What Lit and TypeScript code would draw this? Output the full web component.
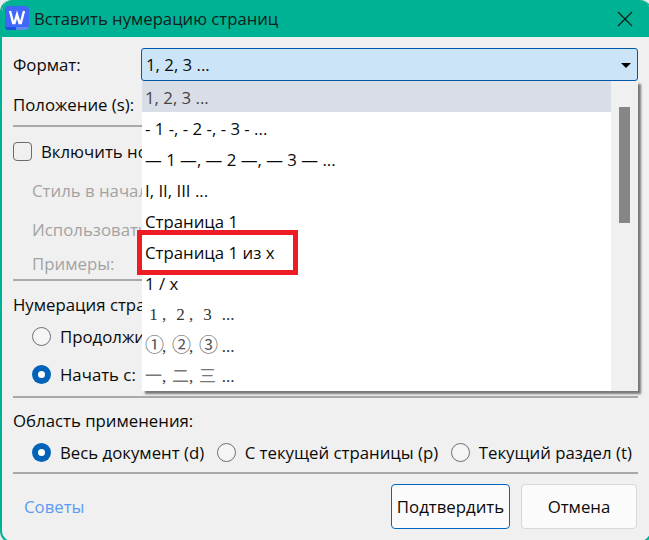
import { LitElement, html, css } from "lit";
import { customElement } from "lit/decorators.js";

const ROWS = [
  "1, 2, 3 ...",
  "- 1 -, - 2 -, - 3 - ...",
  "— 1 —, — 2 —, — 3 — ...",
  "I, II, III ...",
  "Страница 1",
  "Страница 1 из x",
  "1 / x",
];

@customElement("app-root")
export class AppRoot extends LitElement {
  static styles = css`
    :host {
      display: block;
      width: 649px;
      height: 540px;
      overflow: hidden;
      background: #e9ecea;
      font-family: "Open Sans", "Noto Sans", sans-serif;
      font-size: 16.8px;
      color: #0a0a0a;
    }
    .win {
      position: relative;
      box-sizing: border-box;
      width: 652px;
      height: 543px;
      border: 2px solid #00b294;
      border-top: 0;
      border-radius: 12px;
      background: #f0f0f0;
      overflow: hidden;
      display: flex;
      flex-direction: column;
    }
    .title {
      flex: none;
      height: 37px;
      background: #00b294;
      margin-left: -2px;
      margin-right: -2px;
      display: flex;
      align-items: center;
      padding-left: 5px;
      gap: 5px;
    }
    .title .t { line-height: 37px; color: #10201c; font-size: 16.7px; }
    .title .x { margin-left: auto; margin-right: 19px; display: block; }
    .logo { display: block; margin-top: -1px; }
    .body {
      flex: 1;
      display: flex;
      flex-direction: column;
      padding: 11px 12px 0 11px;
    }
    .row { display: flex; align-items: center; white-space: nowrap; }
    .fmt { height: 33px; }
    .fmt .lab { width: 128px; flex: none; }
    .select {
      flex: none;
      box-sizing: border-box;
      width: 497px;
      height: 33px;
      background: #cce4f7;
      border: 1px solid #0058a8;
      border-radius: 3px;
      display: flex;
      align-items: center;
      justify-content: space-between;
      padding: 0 6px 0 4px;
    }
    .caret { width: 0; height: 0; border: 5px solid transparent; border-top: 5px solid #000; border-bottom: 0; margin-top: 2px; }
    .pos { height: 24px; margin-top: 11px; }
    .sep { height: 2px; background: #a9a9a9; flex: none; }
    .sep1 { margin-top: 9px; }
    .chk { height: 20px; margin-top: 14px; gap: 9px; }
    .box { box-sizing: border-box; width: 19px; height: 19px; border: 1px solid #6b6b6b; border-radius: 4px; flex: none; }
    .dim { color: #a3a3a3; height: 24px; padding-left: 19px; }
    .dim1 { margin-top: 17px; }
    .dim2 { margin-top: 15px; }
    .dim3 { margin-top: 10px; }
    .sep2 { margin-top: 4px; }
    .h { height: 24px; margin-top: 11px; }
    .opt { height: 24px; padding-left: 19px; gap: 9px; }
    .opt1 { margin-top: 8px; }
    .opt2 { margin-top: 14px; }
    .radio { box-sizing: border-box; width: 19px; height: 19px; border-radius: 50%; border: 1px solid #6f6f6f; flex: none; background: #f5f5f5; }
    .radio.on { border: 0; background: #0062b8; display: flex; align-items: center; justify-content: center; }
    .radio.on::after { content: ""; width: 7px; height: 7px; border-radius: 50%; background: #fff; }
    .sep3 { margin-top: 10px; }
    .h2 { margin-top: 10px; }
    .scope { margin-top: 8px; gap: 0; }
    .scope .gap { width: 12.5px; flex: none; }
    .scope .lab { margin-left: 9px; }
    .sep4 { margin-top: 8px; }
    .foot { height: 45px; margin-top: 10px; display: flex; align-items: center; }
    .tips { color: #5b9bf5; padding-left: 11px; margin-right: auto; }
    .btn {
      box-sizing: border-box;
      height: 45px;
      background: #fbfbfb;
      border: 1px solid #d8d8d8;
      border-radius: 4px;
      display: flex;
      align-items: center;
      justify-content: center;
    }
    .ok { width: 119px; border-color: #0067c0; margin-right: 11px; }
    .cancel { width: 116px; margin-right: 1px; }

    .drop {
      position: absolute;
      left: 140px;
      top: 81px;
      width: 496px;
      height: 310px;
      background: #fff;
      display: flex;
      box-shadow: 3px 3px 2px rgba(0, 0, 0, 0.5);
    }
    .list { flex: none; width: 469px; }
    .item { height: 31px; line-height: 33px; padding-left: 3px; white-space: nowrap; }
    .item.sel { background: #d9dde5; color: #444; }
    .item.cjk { font-family: "Liberation Serif", "Noto Sans CJK SC", serif; font-size: 17px; color: #333; word-spacing: 1.5px; line-height: 34px; }
    .fw { display: inline-block; width: 17px; text-align: center; }
    .fw.thin { color: #777; }
    .fw.big { font-size: 19px; color: #555; }
    .sb { flex: 1; background: #f0f0f0; position: relative; }
    .thumb { position: absolute; left: 8px; top: 26px; width: 11px; height: 116px; background: #868686; }
    .mark {
      position: absolute;
      left: 135px;
      top: 230px;
      width: 161px;
      height: 45px;
      box-sizing: border-box;
      border: 5px solid #ee1c25;
    }
  `;

  render() {
    return html`
      <div class="win">
        <div class="title">
          <svg class="logo" width="24" height="24" viewBox="0 0 24 24">
            <rect width="24" height="24" rx="4" fill="#3f68fa" />
            <path d="M0 21h11v3H4a4 4 0 0 1-4-3z" fill="#1f4fe0" />
            <path d="M11 21h13a4 4 0 0 1-4 3h-9z" fill="#5b8def" />
            <path d="M5 5l3.200 12h1.300L12 8.500 14.500 17h1.300L19 5" fill="none" stroke="#fff" stroke-width="2.400" />
          </svg>
          <span class="t">Вставить нумерацию страниц</span>
          <svg class="x" width="16" height="16" viewBox="0 0 16 16">
            <path d="M1 1l14 14M15 1L1 15" stroke="#10201c" stroke-width="1.300" fill="none" />
          </svg>
        </div>
        <div class="body">
          <div class="row fmt">
            <span class="lab">Формат:</span>
            <div class="select"><span>1, 2, 3 ...</span><span class="caret"></span></div>
          </div>
          <div class="row pos">Положение (s):</div>
          <div class="sep sep1"></div>
          <div class="row chk"><span class="box"></span><span>Включить номер</span></div>
          <div class="row dim dim1">Стиль в начале</div>
          <div class="row dim dim2">Использовать</div>
          <div class="row dim dim3">Примеры:</div>
          <div class="sep sep2"></div>
          <div class="row h">Нумерация страниц</div>
          <div class="row opt opt1"><span class="radio"></span><span>Продолжить</span></div>
          <div class="row opt opt2"><span class="radio on"></span><span>Начать с:</span></div>
          <div class="sep sep3"></div>
          <div class="row h h2">Область применения:</div>
          <div class="row opt scope">
            <span class="radio on"></span><span class="lab">Весь документ (d)</span><span class="gap"></span>
            <span class="radio"></span><span class="lab">С текущей страницы (p)</span><span class="gap"></span>
            <span class="radio"></span><span class="lab">Текущий раздел (t)</span>
          </div>
          <div class="sep sep4"></div>
          <div class="foot">
            <span class="tips">Советы</span>
            <div class="btn ok">Подтвердить</div>
            <div class="btn cancel">Отмена</div>
          </div>
        </div>
        <div class="drop">
          <div class="list">
            ${ROWS.map((r, i) => html`<div class="item ${i === 0 ? "sel" : ""}">${r}</div>`)}
            <div class="item cjk"><span class="fw">1</span>, <span class="fw">2</span>, <span class="fw">3</span> ...</div>
            <div class="item cjk"><span class="fw big">①</span>, <span class="fw big">②</span>, <span class="fw big">③</span> ...</div>
            <div class="item cjk"><span class="fw thin">一</span>, <span class="fw thin">二</span>, <span class="fw thin">三</span> ...</div>
          </div>
          <div class="sb"><div class="thumb"></div></div>
        </div>
        <div class="mark"></div>
      </div>
    `;
  }
}
